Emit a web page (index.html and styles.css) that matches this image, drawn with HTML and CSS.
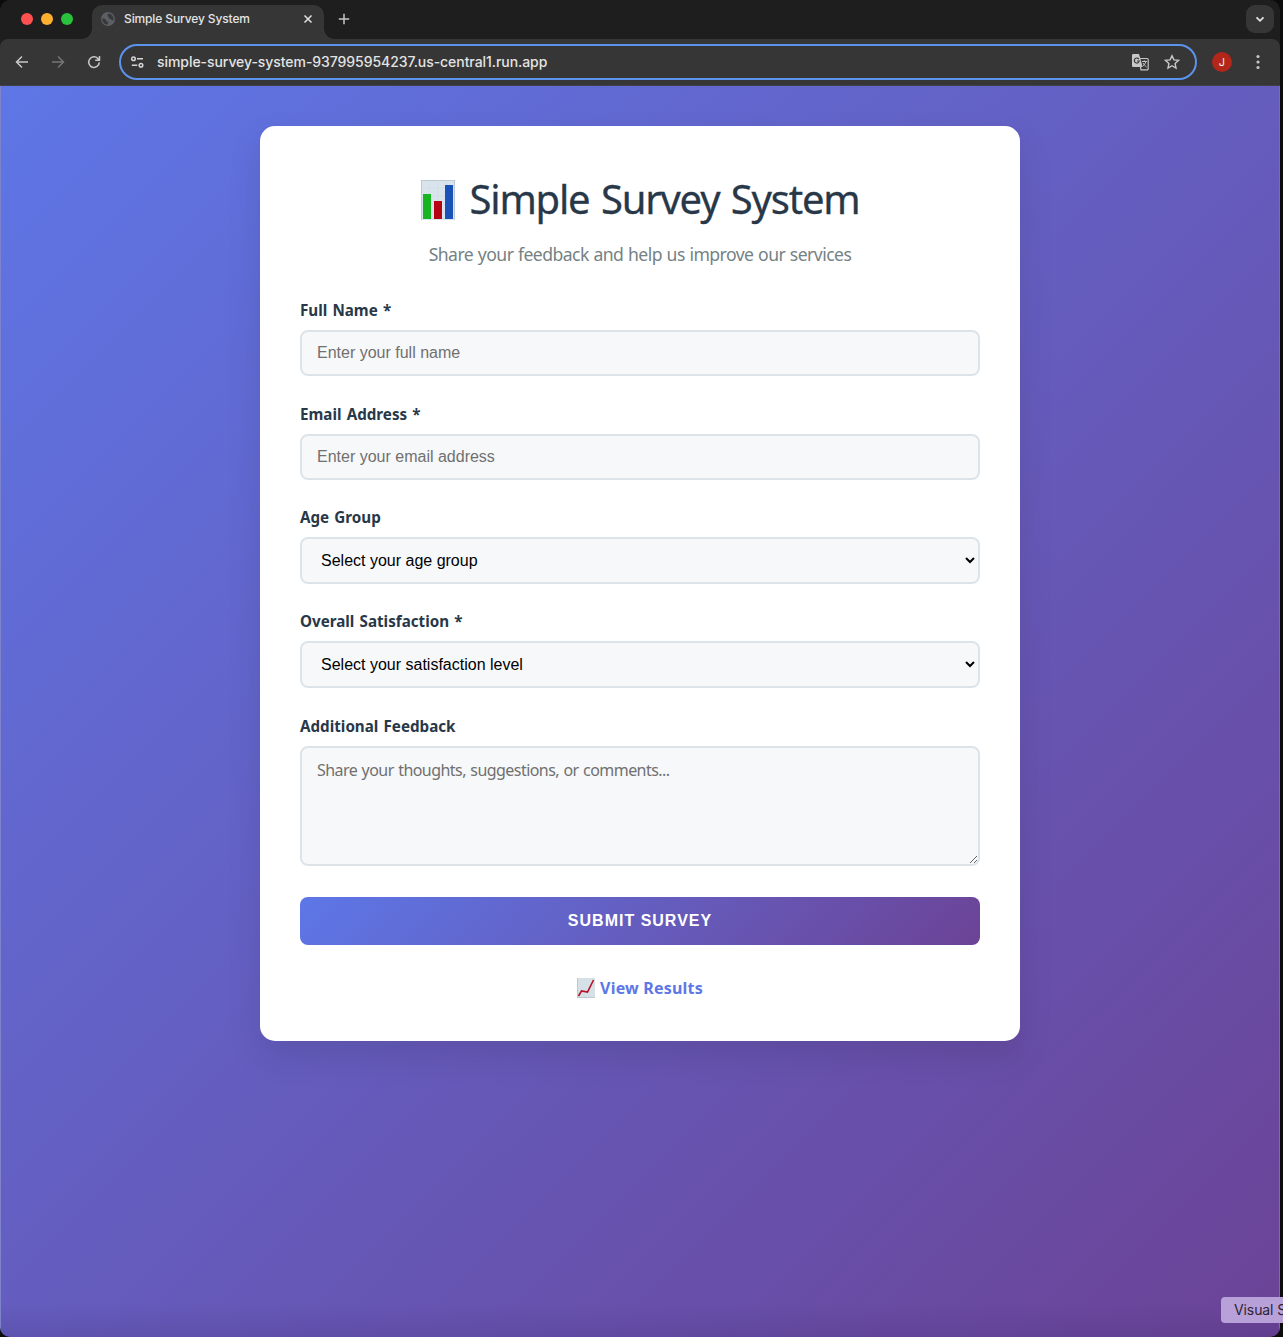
FILE: index.html
```html
<!DOCTYPE html>
<html lang="en">
<head>
<meta charset="utf-8">
<title>Simple Survey System</title>
<link rel="stylesheet" href="styles.css">
</head>
<body>
<div class="window">
  <header class="tabstrip">
    <div class="lights"><i class="light red"></i><i class="light yellow"></i><i class="light green"></i></div>
    <div class="tab">
      <svg class="globe" viewBox="0 0 14 14" width="14" height="14"><circle cx="7" cy="7" r="7" fill="#5c5f65"/><path d="M1.2 6.2 L4.8 7.2 5.4 9.2 7.4 10 6.6 12.6 C3 12.5 1 9.5 1.2 6.2Z M7.4 1.4 6.2 3.8 8 5.2 7.6 6.6 10 7 11 8.8 12.6 8 C13 4.5 10.8 1.5 7.4 1.4Z" fill="#38393b"/></svg>
      <span class="tab-title">Simple Survey System</span>
      <svg class="tab-close" viewBox="0 0 10 10" width="10" height="10"><path d="M1.5 1.5l7 7M8.5 1.5l-7 7" stroke="#e3e3e3" stroke-width="1.5"/></svg>
    </div>
    <svg class="newtab" viewBox="0 0 12 12" width="12" height="12"><path d="M6 .8v10.4M.8 6h10.4" stroke="#c7c7c7" stroke-width="1.5"/></svg>
    <div class="tabsearch"><svg viewBox="0 0 10 10" width="10" height="10"><path d="M1.5 3.3L5 6.8l3.5-3.5" fill="none" stroke="#e3e3e3" stroke-width="1.8"/></svg></div>
  </header>
  <nav class="toolbar">
    <svg class="nav-icon" viewBox="0 0 14 14" width="14" height="14"><path d="M13 7H2M7 1.5L1.5 7 7 12.5" fill="none" stroke="#c7c7c7" stroke-width="1.5"/></svg>
    <svg class="nav-icon" viewBox="0 0 14 14" width="14" height="14"><path d="M1 7h11M7 1.5L12.5 7 7 12.5" fill="none" stroke="#757575" stroke-width="1.5"/></svg>
    <svg class="nav-icon" viewBox="0 0 14 14" width="14" height="14"><path d="M12.3 7.4A5.3 5.3 0 1 1 10.8 3.4L12.5 5M12.5 1v4.2H8.2" fill="none" stroke="#c7c7c7" stroke-width="1.5"/></svg>
    <div class="address">
      <svg class="site-icon" viewBox="0 0 14 12" width="14" height="12"><g fill="none" stroke="#d5d5d5" stroke-width="1.5"><circle cx="2.5" cy="2.8" r="1.8"/><path d="M6 2.8h6M.8 9.2h5.5"/><circle cx="10" cy="9.2" r="1.8"/></g></svg>
      <span class="url">simple-survey-system-937995954237.us-central1.run.app</span>
      <svg class="translate" viewBox="0 0 17 17" width="17" height="17"><path d="M7 4.5h8a1.2 1.2 0 0 1 1.2 1.2v9a1.2 1.2 0 0 1-1.2 1.2H9z" fill="none" stroke="#c7c7c7" stroke-width="1.2"/><path d="M1.3 0H7l3.7 13H1.3A1.3 1.3 0 0 1 0 11.7V1.3A1.3 1.3 0 0 1 1.3 0Z" fill="#c7c7c7"/><path d="M6.9 5.1A2.5 2.5 0 1 0 7.3 7H5" fill="none" stroke="#38393b" stroke-width="1.2"/><path d="M10 7.5h5M12.3 6.3v1.2M13.8 7.5c-.4 2-1.6 3.5-3 4.7M11 9c.8 1.5 2 2.8 3.5 4" fill="none" stroke="#c7c7c7"/></svg>
      <svg class="star" viewBox="0 0 16 16" width="16" height="16"><path d="M8 1.7l1.9 4.2 4.6.5-3.4 3.1.9 4.5-4-2.3L4 14l.9-4.5L1.5 6.4l4.6-.5z" fill="none" stroke="#c7c7c7" stroke-width="1.4"/></svg>
    </div>
    <div class="avatar">J</div>
    <svg class="kebab" viewBox="0 0 4 16" width="4" height="16"><g fill="#c7c7c7"><circle cx="2" cy="2.5" r="1.6"/><circle cx="2" cy="8" r="1.6"/><circle cx="2" cy="13.5" r="1.6"/></g></svg>
  </nav>
  <main class="page">
    <form class="card">
      <h1 class="title">
        <svg viewBox="0 0 34 40" width="34" height="40"><path d="M0 0h34v40H0z" fill="#d9e4ec"/><path d="M0 .5h34M.5 0v40M33.5 0v40" stroke="#bccad3"/><path d="M0 8h34M0 16h34M0 24h34M0 32h34M8 0v40M17 0v40M26 0v40" stroke="#cfdce5" stroke-width=".5"/><path d="M2 14h8v25H2z" fill="#18b522"/><path d="M13 21h8v18h-8z" fill="#b50515"/><path d="M24 5h8v34h-8z" fill="#1b52b7"/></svg>
        <span class="title-text">Simple Survey System</span>
      </h1>
      <p class="subtitle">Share your feedback and help us improve our services</p>
      <div class="group wide"><label class="label" for="name">Full Name *</label><input class="field" id="name" type="text" placeholder="Enter your full name"></div>
      <div class="group"><label class="label" for="email">Email Address *</label><input class="field" id="email" type="email" placeholder="Enter your email address"></div>
      <div class="group"><label class="label" for="age">Age Group</label><select class="field select" id="age"><option>Select your age group</option></select></div>
      <div class="group wide"><label class="label" for="sat">Overall Satisfaction *</label><select class="field select" id="sat"><option>Select your satisfaction level</option></select></div>
      <div class="group last"><label class="label" for="more">Additional Feedback</label><textarea class="field area" id="more" placeholder="Share your thoughts, suggestions, or comments..."></textarea></div>
      <button class="submit" type="button">SUBMIT SURVEY</button>
      <a class="results"><svg viewBox="0 0 18 20" width="18" height="20"><path d="M0 0h18v20H0z" fill="#d5e0e7"/><path d="M.5 0v19.5H18" fill="none" stroke="#bcc9d0"/><path d="M1.5 18l3-5 6 1L16.5 2" fill="none" stroke="#b9132b" stroke-width="1.6"/></svg><span class="results-text">View Results</span></a>
    </form>
  </main>
</div>
<div class="tooltip">Visual S</div>
</body>
</html>
```
FILE: styles.css
```css
* { box-sizing: border-box; }
html, body { height: 100%; }
body { margin: 0; background: #0b0c0b; overflow: hidden; position: relative; font-family: "Noto Sans", sans-serif; }
.window { width: 1280px; height: 1337px; border-radius: 10px; overflow: hidden; display: flex; flex-direction: column; background: #1e1e1e; }
.tabstrip { height: 39px; display: flex; align-items: flex-start; flex: none; font-family: Inter, sans-serif; }
.lights { display: flex; gap: 8px; padding: 13px 0 0 21px; width: 92px; }
.light { width: 12px; height: 12px; border-radius: 50%; }
.red { background: #ff5050; }
.yellow { background: #ffb02e; }
.green { background: #28c23c; }
.tab { position: relative; width: 232px; height: 34px; margin-top: 5px; background: #363636; border-radius: 10px 10px 0 0; display: flex; align-items: center; padding: 0 11px 6px 9px; }
.tab::before, .tab::after { content: ""; position: absolute; bottom: 0; width: 10px; height: 10px; }
.tab::before { left: -10px; background: radial-gradient(circle at 0 0, transparent 9.5px, #363636 10px); }
.tab::after { right: -10px; background: radial-gradient(circle at 100% 0, transparent 9.5px, #363636 10px); }
.tab-title { margin-left: 9px; padding-bottom: 2px; font-size: 12px; color: #e3e3e3; font-weight: 500; letter-spacing: -.12px; white-space: nowrap; }
.tab-close { margin-left: auto; }
.newtab { margin: 13px 0 0 14px; }
.tabsearch { width: 28px; height: 28px; border-radius: 9px; background: #363636; margin: 5px 6px 0 auto; display: flex; align-items: center; justify-content: center; }
.toolbar { height: 47px; flex: none; background: #363636; border-radius: 8px 8px 0 0; border-bottom: 1px solid #404048; display: flex; align-items: center; padding-left: 15px; }
.nav-icon { margin-right: 22px; }
.address { width: 1078px; height: 36px; margin-left: -4px; border: 2px solid #5c93ec; border-radius: 18px; display: flex; align-items: center; padding: 0 15px 0 10px; font: 500 14px Inter, sans-serif; color: #e3e3e3; }
.url { margin-left: 12px; padding-bottom: 1px; letter-spacing: -.06px; white-space: nowrap; }
.translate { margin-left: auto; margin-right: 15px; }
.avatar { width: 20px; height: 20px; margin-left: 15px; border-radius: 50%; background: #b3261a; color: #eee; font: 11px/20px Inter, sans-serif; text-align: center; }
.kebab { margin-left: 24px; }
.page { flex: 1; padding: 40px 0 0 259px; background: linear-gradient(to top, rgba(60,40,110,.18), transparent 34px), linear-gradient(135deg, #5e76e6 0%, #6b4396 100%); border-left: 1px solid #7e83ca; border-right: 1px solid #8568b4; }
.card { width: 760px; height: 915px; border-radius: 15px; background: #fff; padding: 50px 40px 0; box-shadow: 0 15px 35px rgba(0,0,0,.1); display: flex; flex-direction: column; }
.title { margin: 0; height: 48px; display: flex; align-items: center; justify-content: center; gap: 15px; font-size: 40px; font-weight: 400; color: #283848; white-space: nowrap; }
.title-text { padding-bottom: 3px; letter-spacing: -1.2px; word-spacing: 2.2px; -webkit-text-stroke: .3px #283848; }
.subtitle { margin: 18px 0 0; height: 24px; font-size: 17.6px; line-height: 24px; text-align: center; color: #748284; letter-spacing: -.55px; word-spacing: .6px; white-space: nowrap; }
.group { display: flex; flex-direction: column; margin-bottom: 28px; }
.subtitle + .group { margin-top: 34px; }
.wide { margin-bottom: 29px; }
.last { margin-bottom: 31px; }
.label { height: 20px; margin-bottom: 10px; font-size: 15.2px; line-height: 20px; font-weight: 700; color: #283848; letter-spacing: 0; word-spacing: 1.2px; }
.group + .group { margin-top: -1px; }
.field { width: 100%; height: 46px; margin: 0; border: 2px solid #dce4ea; border-radius: 8px; background: #f7f8fa; padding: 0 15px; font: 16px "Liberation Sans", Arial, sans-serif; outline: none; }
.field::placeholder { color: #707070; }
.select { height: 47px; color: #000; }
.area { height: 120px; padding: 12px 15px; font: 16px/20px "Noto Sans", sans-serif; letter-spacing: -.55px; word-spacing: .8px; resize: vertical; }
.submit { height: 48px; flex: none; border: 0; border-radius: 8px; background: linear-gradient(135deg, #5d77e7, #6c4396); color: #fff; font: 700 16px "Liberation Sans", Arial, sans-serif; letter-spacing: 1px; }
.results { margin-top: 33px; height: 20px; display: flex; justify-content: center; align-items: center; gap: 5px; font-size: 16px; font-weight: 700; color: #5d77e7; }
.results-text { letter-spacing: .2px; }
.tooltip { position: absolute; left: 1221px; top: 1297px; width: 62px; height: 26px; padding-left: 13px; border-radius: 4px 0 0 4px; overflow: hidden; background: #b8a0d9; color: #2b2434; font: 14px/26px Inter, sans-serif; letter-spacing: -.1px; white-space: nowrap; }
```
